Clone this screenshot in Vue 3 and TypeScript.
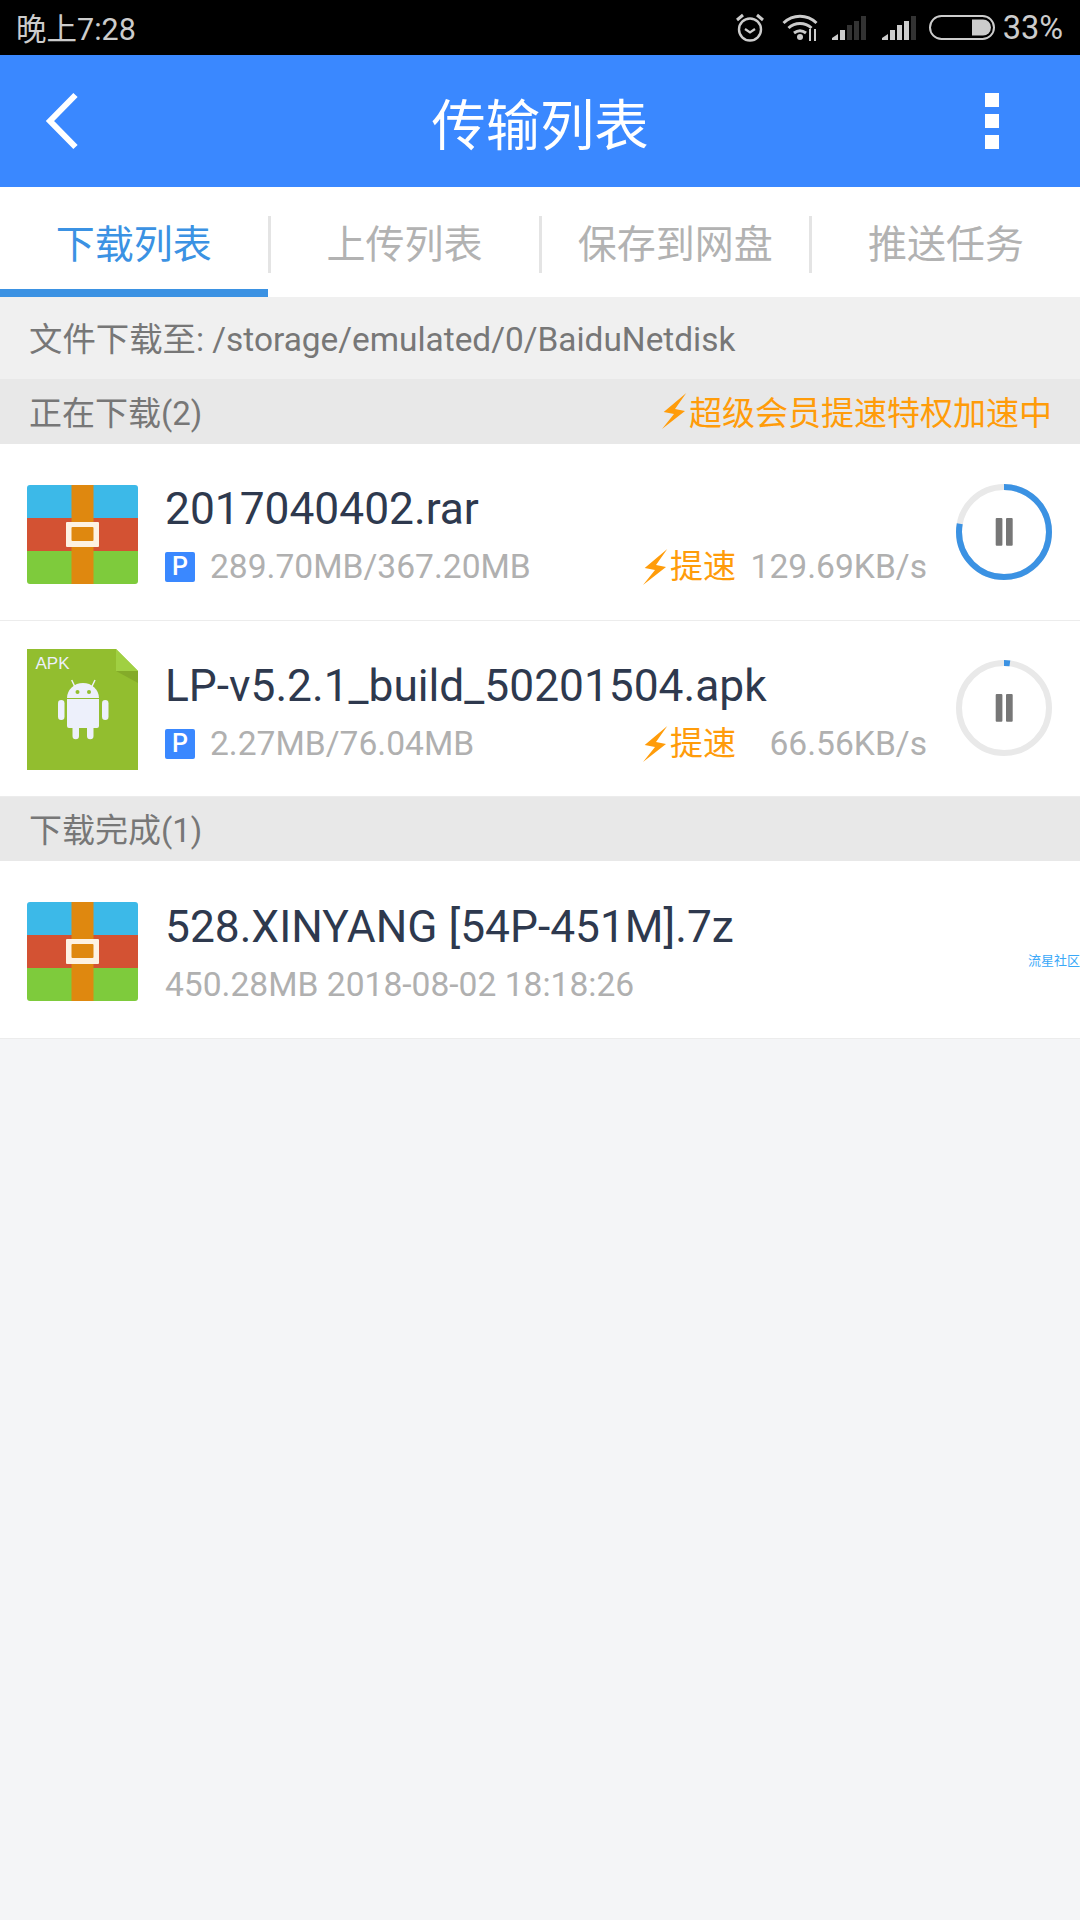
<script setup lang="ts">
interface Row { name: string; size: string; speed: string; pct: number }
const rows: Row[] = [
  { name: '2017040402.rar', size: '289.70MB/367.20MB', speed: '129.69KB/s', pct: 77.8 },
  { name: 'LP-v5.2.1_build_50201504.apk', size: '2.27MB/76.04MB', speed: '66.56KB/s', pct: 2.1 },
]
const tabs = ['下载列表', '上传列表', '保存到网盘', '推送任务']
const circ = 2 * Math.PI * 45
const dash = (p: number) => `${(circ * p) / 100} ${circ}`
</script>

<template>
  <div class="page">
    <div class="status">
      <span class="time">晚上7:28</span>
      <div class="status-right">
        <svg class="s-alarm" width="30" height="30" viewBox="0 0 30 30">
          <circle cx="15" cy="16.500" r="11" fill="none" stroke="#ccc" stroke-width="2.400" />
          <path d="M10 16l5 3.500 5-3.500" fill="none" stroke="#ccc" stroke-width="2.200" />
          <path d="M2 7l6-5M28 7l-6-5" fill="none" stroke="#ccc" stroke-width="3" />
        </svg>
        <svg class="s-wifi" width="37" height="27" viewBox="0 0 37 27">
          <path d="M1.500 9C11 0 25 0 34.500 9" fill="none" stroke="#ccc" stroke-width="3" />
          <path d="M6.500 14C13 8 23 8 29.500 14" fill="none" stroke="#ccc" stroke-width="3" />
          <path d="M12 19c4-3 8-3 12 0" fill="none" stroke="#ccc" stroke-width="3" />
          <circle cx="18" cy="23" r="3" fill="#ccc" />
          <path d="M28 15v12M33 15v12" stroke="#ccc" stroke-width="2" />
        </svg>
        <svg class="s-sig" width="34" height="24" viewBox="0 0 34 24">
          <path d="M0 24v-2l6-4v6z" fill="#ccc" />
          <rect x="8" y="14" width="5" height="10" fill="#ccc" />
          <rect x="15" y="9" width="5" height="15" fill="#333" />
          <rect x="22" y="5" width="5" height="19" fill="#333" />
          <rect x="29" y="0" width="5" height="24" fill="#333" />
        </svg>
        <svg class="s-sig last" width="34" height="24" viewBox="0 0 34 24">
          <path d="M0 24v-2l6-4v6z" fill="#ccc" />
          <rect x="8" y="14" width="5" height="10" fill="#ccc" />
          <rect x="15" y="9" width="5" height="15" fill="#ccc" />
          <rect x="22" y="5" width="5" height="19" fill="#ccc" />
          <rect x="29" y="0" width="5" height="24" fill="#333" />
        </svg>
        <svg class="s-bat" width="66" height="25" viewBox="0 0 66 25">
          <rect x="1" y="1" width="64" height="23" rx="11.500" fill="none" stroke="#ccc" stroke-width="2" />
          <path d="M43 4.500h11a8 8 0 0 1 0 16H43z" fill="#ccc" />
        </svg>
        <span class="pct">33%</span>
      </div>
    </div>

    <header class="bar">
      <svg class="back" width="33" height="58" viewBox="0 0 33 58">
        <path d="M30.500 3L5 29l25.500 26" fill="none" stroke="#fff" stroke-width="6" />
      </svg>
      <h1 class="title">传输列表</h1>
      <div class="more"><i></i><i></i><i></i></div>
    </header>

    <nav class="tabs">
      <div v-for="(t, i) in tabs" :key="t" class="tab" :class="{ on: i === 0 }">{{ t }}</div>
    </nav>

    <div class="path">文件下载至: /storage/emulated/0/BaiduNetdisk</div>

    <div class="section first">
      <span>正在下载(2)</span>
      <span class="boost-head">
        <svg class="bolt" width="25" height="36" viewBox="0 0 25 36"><path d="M24.300 0L1.700 19 12 21 0 36l23-18-10-2z" fill="#ff9c0a" /></svg>超级会员提速特权加速中
      </span>
    </div>

    <div v-for="(r, i) in rows" :key="r.name" class="row">
      <svg v-if="i === 0" class="file rar" width="111" height="99" viewBox="0 0 111 99">
        <rect width="111" height="33" fill="#3cb9e8" />
        <rect y="33" width="111" height="33" fill="#d35233" />
        <rect y="66" width="111" height="33" fill="#7ecb3c" />
        <rect x="44.500" width="22" height="99" fill="#df880f" />
        <rect x="39" y="37" width="33" height="25" rx="1" fill="#fdf2e3" />
        <rect x="44.500" y="42" width="22" height="14" rx="1" fill="#df880f" />
      </svg>
      <svg v-else class="file apk-file" width="111" height="121" viewBox="0 0 111 121">
        <path d="M0 0h89l22 22v99H0z" fill="#92be2f" />
        <path d="M89 0l22 22H89z" fill="#a0d042" />
        <path d="M89 22h22v12z" fill="#84ab29" />
        <path d="M44.700 31l3.300 7M68 31l-3.300 7" stroke="#edf0fb" stroke-width="1.500" />
        <path d="M40 49a16 15 0 0 1 32 0z" fill="#edf0fb" />
        <circle cx="50.500" cy="43" r="2" fill="#92be2f" />
        <circle cx="62" cy="43" r="2" fill="#92be2f" />
        <path d="M40 50h32v27a2 2 0 0 1-2 2h-3.500v8a3.250 3.250 0 0 1-6.500 0v-8h-8v8a3.250 3.250 0 0 1-6.500 0v-8H42a2 2 0 0 1-2-2z" fill="#edf0fb" />
        <rect x="31" y="51" width="6.500" height="20" rx="3.250" fill="#edf0fb" />
        <rect x="75" y="51" width="6.500" height="20" rx="3.250" fill="#edf0fb" />
        <text x="8.500" y="20" class="apk">APK</text>
      </svg>
      <div class="info">
        <div class="name">{{ r.name }}</div>
        <div class="meta">
          <span class="p">P</span>
          <span class="size">{{ r.size }}</span>
          <span class="boost">
            <svg class="bolt" width="25" height="36" viewBox="0 0 25 36"><path d="M24.300 0L1.700 19 12 21 0 36l23-18-10-2z" fill="#ff9c0a" /></svg>提速
          </span>
          <span class="speed">{{ r.speed }}</span>
        </div>
      </div>
      <div class="ring">
        <svg width="96" height="96" viewBox="0 0 96 96">
          <circle cx="48" cy="48" r="45" fill="none" stroke="#e9e9e9" stroke-width="6" />
          <circle cx="48" cy="48" r="45" fill="none" stroke="#3b92e3" stroke-width="6"
            :stroke-dasharray="dash(r.pct)" transform="rotate(-90 48 48)" />
          <rect x="39.700" y="34" width="6.700" height="27.700" rx="1" fill="#777" />
          <rect x="50" y="34" width="6.700" height="27.700" rx="1" fill="#777" />
        </svg>
      </div>
    </div>

    <div class="section">下载完成(1)</div>

    <div class="row done">
      <svg class="file rar" width="111" height="99" viewBox="0 0 111 99">
        <rect width="111" height="33" fill="#3cb9e8" />
        <rect y="33" width="111" height="33" fill="#d35233" />
        <rect y="66" width="111" height="33" fill="#7ecb3c" />
        <rect x="44.500" width="22" height="99" fill="#df880f" />
        <rect x="39" y="37" width="33" height="25" rx="1" fill="#fdf2e3" />
        <rect x="44.500" y="42" width="22" height="14" rx="1" fill="#df880f" />
      </svg>
      <div class="info">
        <div class="name">528.XINYANG [54P-451M].7z</div>
        <div class="meta"><span class="size">450.28MB 2018-08-02 18:18:26</span></div>
      </div>
      <span class="wm">流星社区</span>
    </div>
  </div>
</template>

<style>
html, body { margin: 0; background: #f4f5f7; }
</style>

<style scoped>
.page {
  width: 1080px;
  height: 1920px;
  background: #f4f5f7;
  font-family: Roboto, "Noto Sans CJK SC", sans-serif;
  overflow: hidden;
}
.status {
  height: 55px;
  background: #000;
  display: flex;
  align-items: center;
  justify-content: space-between;
  padding: 0 17px 0 16px;
  color: #ccc;
  font-size: 30.500px;
}
.time { margin-top: -2px; }
.status-right { display: flex; align-items: center; }
.pct { font-size: 32.500px; }
.s-alarm { margin-right: 17px; }
.s-wifi { margin-right: 13px; }
.s-sig { margin-right: 16px; }
.s-sig.last { margin-right: 13px; }
.s-bat { margin-right: 8px; }
.bar {
  height: 132px;
  background: #3a88ff;
  display: flex;
  align-items: center;
  justify-content: space-between;
  padding: 0 81px 0 45px;
  position: relative;
}
.back { display: block; }
.title {
  position: absolute;
  left: 0;
  right: 0;
  text-align: center;
  margin: 0;
  color: #fff;
  font-size: 54.300px;
  font-weight: 400;
}
.more { display: flex; flex-direction: column; gap: 7px; }
.more i { display: block; width: 14px; height: 14px; background: #fff; }
.tabs {
  height: 110px;
  background: #fff;
  display: flex;
}
.tab {
  flex: 1;
  display: flex;
  align-items: center;
  justify-content: center;
  padding: 0 3px 2px 0;
  box-sizing: border-box;
  font-size: 39px;
  color: #b2b2b2;
  position: relative;
}
.tab::after {
  content: "";
  position: absolute;
  right: 0;
  top: 29px;
  height: 57px;
  width: 3px;
  background: #e4e4e4;
}
.tab:last-child { padding-right: 0; }
.tab:last-child::after { display: none; }
.tab.on { color: #3b92e3; }
.tab.on::before {
  content: "";
  position: absolute;
  left: 0;
  right: 3px;
  bottom: 0;
  height: 8px;
  background: #3b92e3;
}
.path {
  height: 82px;
  box-sizing: border-box;
  display: flex;
  align-items: center;
  padding: 0 0 3px 29px;
  background: #f0f0f0;
  color: #777;
  font-size: 33.400px;
}
.section {
  height: 64px;
  box-sizing: border-box;
  display: flex;
  align-items: center;
  justify-content: space-between;
  padding: 0 28px 2px 29px;
  background: #e8e8e8;
  color: #777;
  font-size: 33px;
}
.section.first { height: 65px; }
.boost-head { color: #ff9c0a; display: flex; align-items: center; }
.row {
  height: 176.500px;
  box-sizing: border-box;
  background: #fff;
  border-bottom: 1px solid #ececec;
  display: flex;
  align-items: center;
  padding: 0 28px 0 27px;
  position: relative;
}
.file { flex: none; display: block; }
.file.rar { border-radius: 3px; margin-top: 5px; }
.file.apk-file { margin-top: 2px; }
.info { flex: 1; margin: 9px 0 0 27px; min-width: 0; }
.name { color: #2e394e; font-size: 44.300px; line-height: 50px; white-space: nowrap; }
.meta {
  display: flex;
  align-items: center;
  margin-top: 12px;
  color: #b0b0b0;
  font-size: 33.600px;
  line-height: 42px;
}
.p {
  width: 30px;
  height: 30px;
  border-radius: 2px;
  background: #3a88ff;
  color: #fff;
  font-size: 25px;
  font-weight: 500;
  line-height: 30px;
  text-align: center;
  margin-right: 15px;
}
.boost {
  margin-left: auto;
  display: flex;
  align-items: center;
  color: #ff9c0a;
  font-size: 33px;
}
.bolt { display: block; flex: none; margin-right: 2px; }
.speed { width: 191px; text-align: right; white-space: nowrap; }
.ring { flex: none; margin-left: 29px; width: 96px; height: 96px; }
.ring svg { display: block; }
.apk { fill: #edf0fb; font: 17px "Liberation Sans", sans-serif; }
.done { height: 178px; }
.done .file.rar { margin-top: 3px; }
.wm {
  position: absolute;
  right: 0;
  top: 89px;
  font-size: 13px;
  color: #3aa8f8;
}
</style>
